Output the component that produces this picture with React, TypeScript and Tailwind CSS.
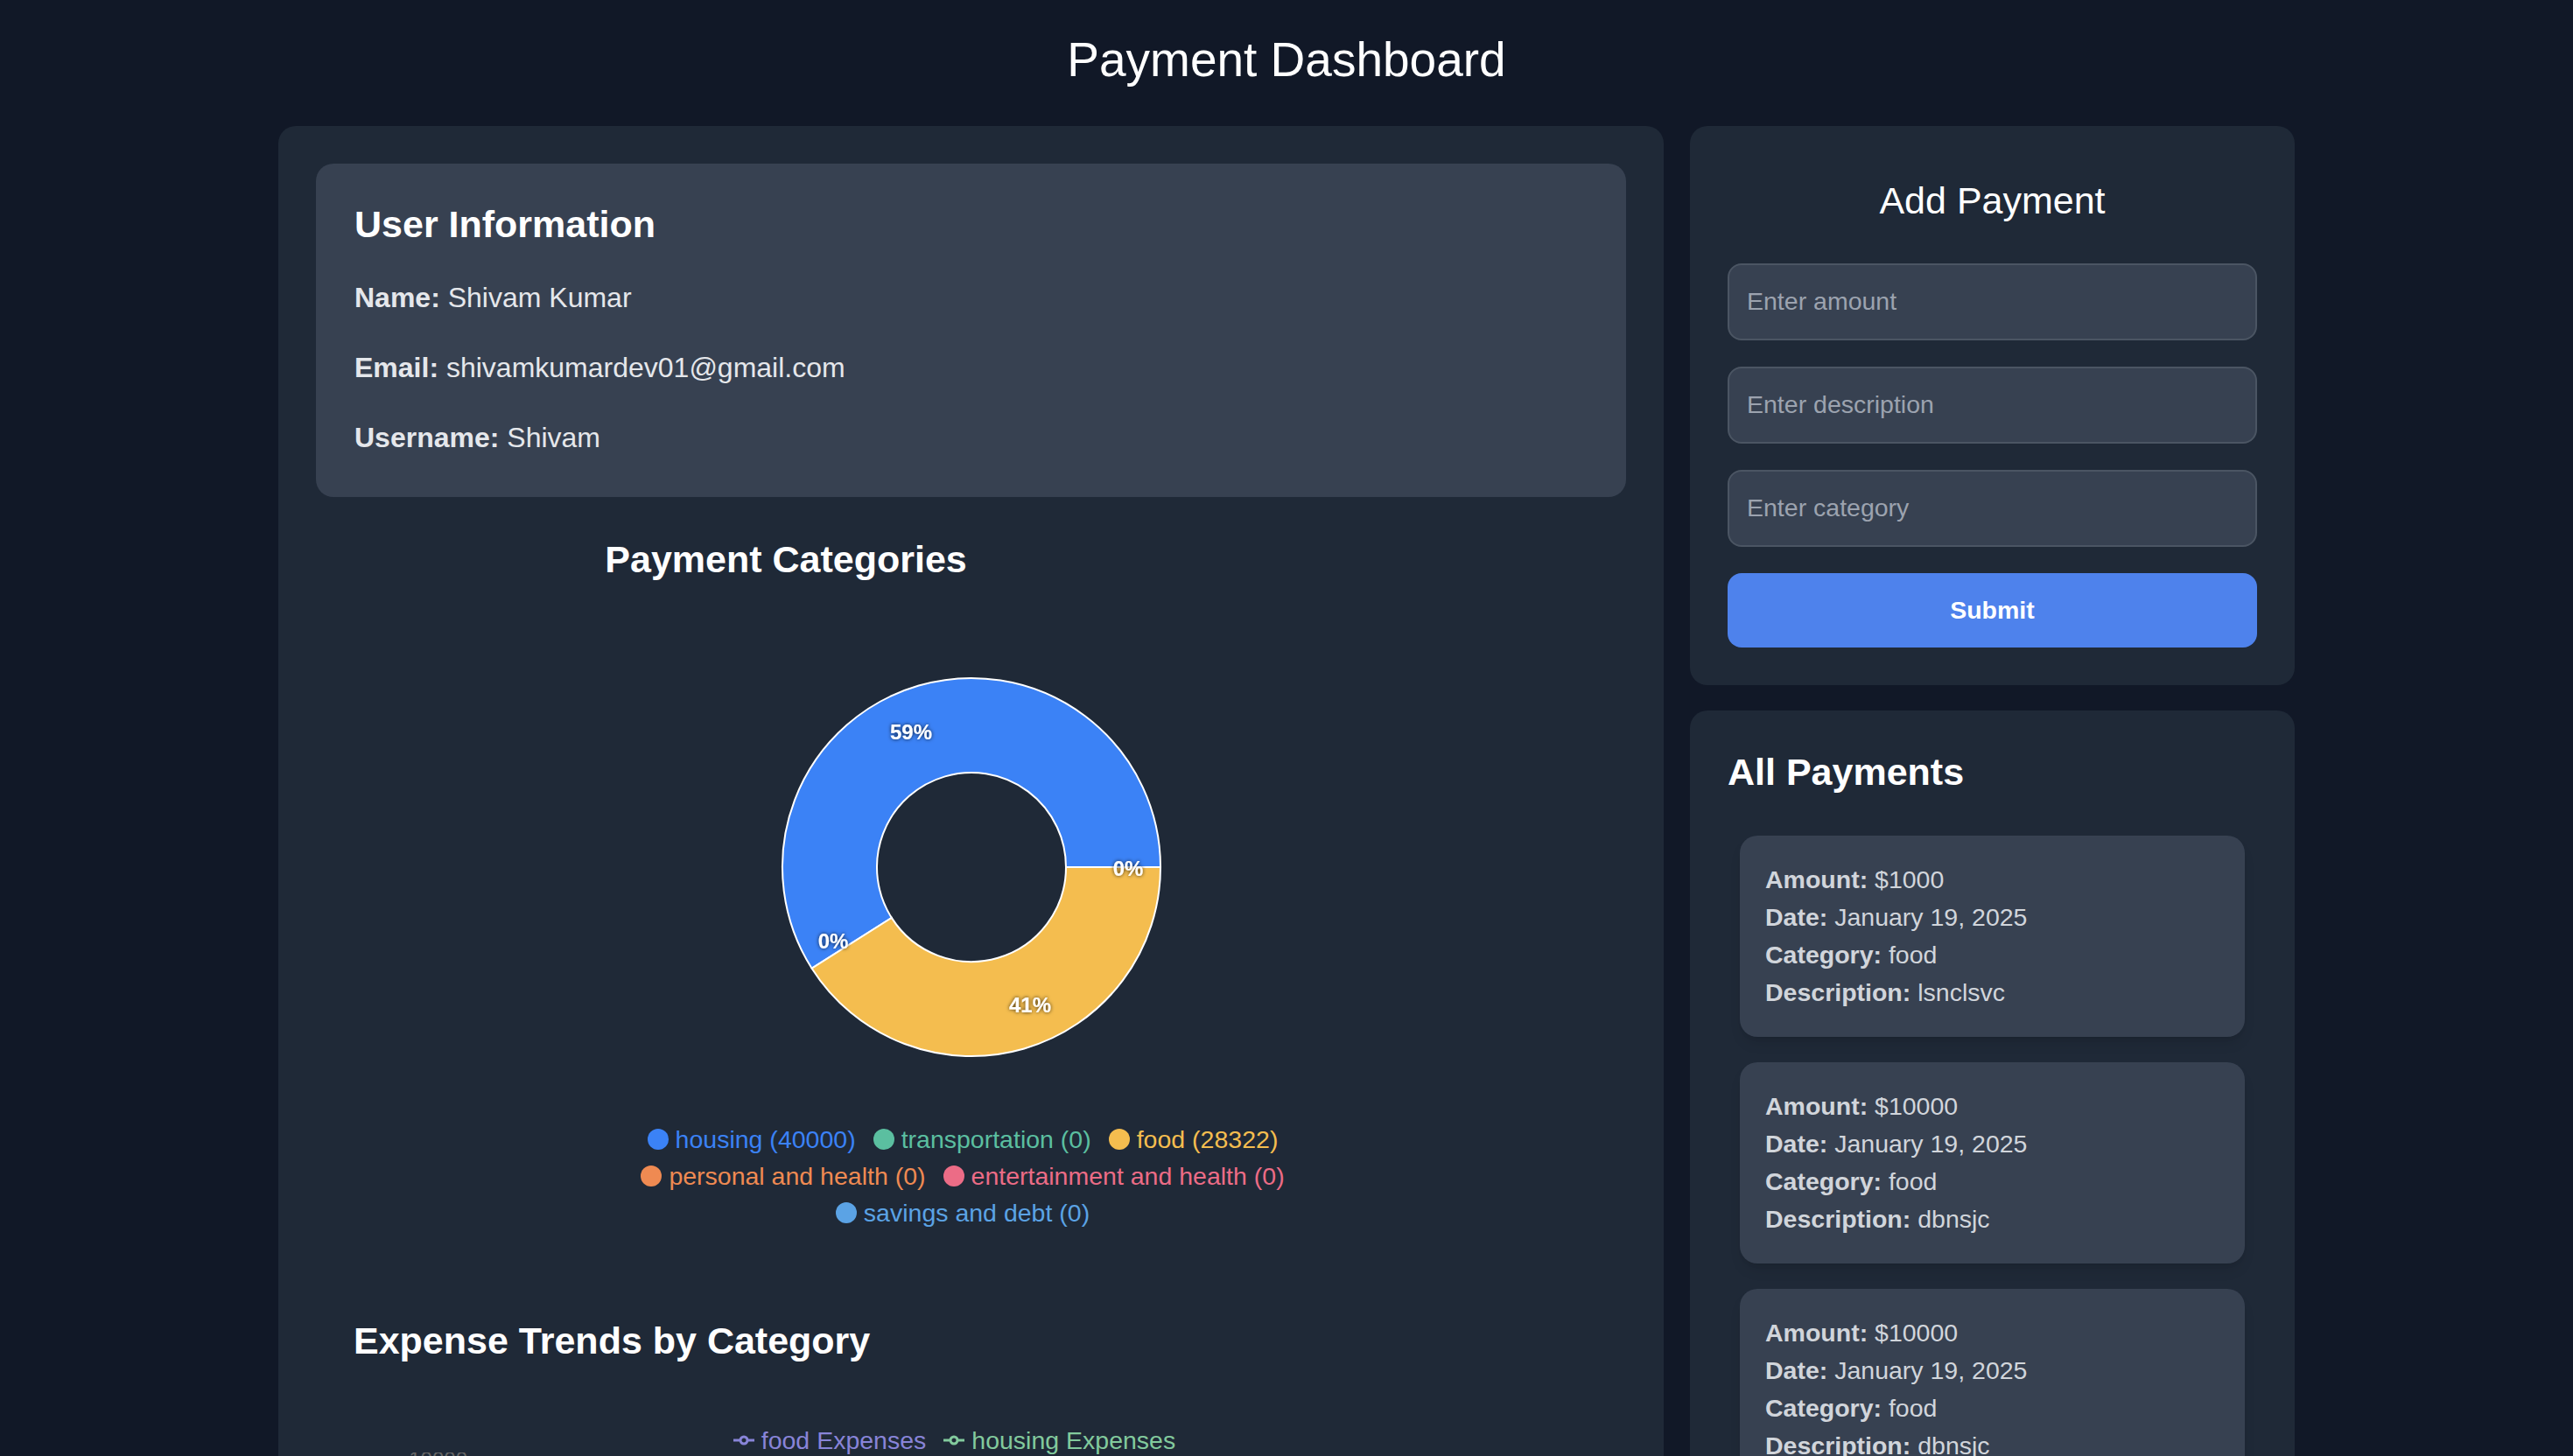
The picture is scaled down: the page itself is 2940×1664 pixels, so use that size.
const categories = [
  { name: "housing", value: 40000, color: "#3b82f6" },
  { name: "transportation", value: 0, color: "#5bbfa0" },
  { name: "food", value: 28322, color: "#f4bd4f" },
  { name: "personal and health", value: 0, color: "#ef8a52" },
  { name: "entertainment and health", value: 0, color: "#ec6c86" },
  { name: "savings and debt", value: 0, color: "#5ba3e5" },
]

const payments = [
  { amount: 1000, date: "January 19, 2025", category: "food", description: "lsnclsvc" },
  { amount: 10000, date: "January 19, 2025", category: "food", description: "dbnsjc" },
  { amount: 10000, date: "January 19, 2025", category: "food", description: "dbnsjc" },
]

const UserInfo = () => (
  <div className="rounded-[20px] bg-[#374151] p-[44px] text-[#e5e7eb]">
    <h2 className="text-[43px] font-bold leading-[1.2] text-white">User Information</h2>
    <p className="mt-[33px] text-[32px] leading-[48px]"><strong>Name:</strong> Shivam Kumar</p>
    <p className="mt-[32px] text-[32px] leading-[48px]"><strong>Email:</strong> shivamkumardev01@gmail.com</p>
    <p className="mt-[32px] text-[32px] leading-[48px]"><strong>Username:</strong> Shivam</p>
  </div>
)

const Donut = () => (
  <svg width="440" height="440" viewBox="0 0 440 440">
    <defs>
      <filter id="lbl" x="-50%" y="-50%" width="200%" height="200%">
        <feDropShadow dx="0" dy="0" stdDeviation="2" floodColor="#000" floodOpacity="0.8" />
      </filter>
    </defs>
    {/* housing 59% */}
    <path d="M 37.6 335.7 A 216 216 0 1 1 436 220 L 328 220 A 108 108 0 1 0 128.8 277.9 Z" fill="#3b82f6" stroke="#fff" strokeWidth="2" />
    {/* food 41% */}
    <path d="M 436 220 A 216 216 0 0 1 37.6 335.7 L 128.8 277.9 A 108 108 0 0 0 328 220 Z" fill="#f4bd4f" stroke="#fff" strokeWidth="2" />
    <g fill="#fff" fontSize="24" fontWeight="700" textAnchor="middle" dominantBaseline="central" filter="url(#lbl)">
      <text x="151" y="65">59%</text>
      <text x="399" y="221">0%</text>
      <text x="62" y="304">0%</text>
      <text x="287" y="377">41%</text>
    </g>
  </svg>
)

const PieLegend = () => (
  <div className="ml-[289px] mt-[70px] flex w-[900px] flex-wrap justify-center gap-x-[20px] text-[28.5px]">
    {categories.map((c) => (
      <div key={c.name} className="flex h-[42px] items-center gap-[8px]" style={{ color: c.color }}>
        <span className="h-[24px] w-[24px] rounded-full" style={{ backgroundColor: c.color }} />
        <span>{c.name} ({c.value})</span>
      </div>
    ))}
  </div>
)

const LineIcon = ({ color }: { color: string }) => (
  <svg width="24" height="24" viewBox="0 0 32 32">
    <path
      strokeWidth="4"
      fill="none"
      stroke={color}
      d="M0,16h10.67A5.33,5.33,0,1,1,21.33,16H32M21.33,16A5.33,5.33,0,1,1,10.67,16"
    />
  </svg>
)

const TrendChart = () => (
  <div className="w-[1373px]">
    <div className="mt-[73px] flex justify-center gap-[20px] text-[28.5px] leading-[28px]">
      <div className="flex items-center gap-[8px] text-[#8884d8]">
        <LineIcon color="#8884d8" />
        <span>food Expenses</span>
      </div>
      <div className="flex items-center gap-[8px] text-[#82ca9d]">
        <LineIcon color="#82ca9d" />
        <span>housing Expenses</span>
      </div>
    </div>
    <svg width="1373" height="620" viewBox="0 0 1373 620">
      {[0, 1, 2, 3, 4].map((i) => (
        <g key={i}>
          <line x1="140" x2="1340" y1={7 + i * 130} y2={7 + i * 130} stroke="#ccc" strokeDasharray="6 6" />
          <text x="130" y={7 + i * 130} fill="#666" fontSize="24" textAnchor="end" dominantBaseline="central">
            {10000 - i * 2500}
          </text>
        </g>
      ))}
      <line x1="140" x2="140" y1="7" y2="527" stroke="#666" strokeWidth="2" />
      <line x1="140" x2="1340" y1="527" y2="527" stroke="#666" strokeWidth="2" />
      <polyline points="140,501 740,501 1340,100" fill="none" stroke="#8884d8" strokeWidth="3" />
      <polyline points="140,527 740,527 1340,7" fill="none" stroke="#82ca9d" strokeWidth="3" />
    </svg>
  </div>
)

const AddPayment = () => (
  <div className="rounded-[20px] bg-[#1f2937] p-[43px]">
    <h2 className="mt-[17px] mb-[45px] text-center text-[43px] leading-[1.2] text-white">Add Payment</h2>
    <form className="flex flex-col gap-[30px]">
      <input placeholder="Enter amount" className="h-[88px] rounded-[16px] border-2 border-[#4b5563] bg-[#374151] px-[20px] text-[28.5px] text-white outline-none placeholder:text-[#9ca3af]" />
      <input placeholder="Enter description" className="h-[88px] rounded-[16px] border-2 border-[#4b5563] bg-[#374151] px-[20px] text-[28.5px] text-white outline-none placeholder:text-[#9ca3af]" />
      <input placeholder="Enter category" className="h-[88px] rounded-[16px] border-2 border-[#4b5563] bg-[#374151] px-[20px] text-[28.5px] text-white outline-none placeholder:text-[#9ca3af]" />
      <button type="button" className="h-[85px] rounded-[16px] bg-[#4e82ec] text-[28.5px] font-bold text-white">Submit</button>
    </form>
  </div>
)

const AllPayments = () => (
  <div className="rounded-[20px] bg-[#1f2937] p-[43px]">
    <h2 className="mt-[2px] text-[43px] font-bold leading-[1.2] text-white">All Payments</h2>
    <div className="mt-[47px] flex flex-col gap-[29px] px-[14px]">
      {payments.map((p, i) => (
        <div key={i} className="rounded-[20px] bg-[#374151] p-[29px] text-[28.5px] leading-[43px] text-[#d1d5db] shadow-lg">
          <p><strong>Amount:</strong> ${p.amount}</p>
          <p><strong>Date:</strong> {p.date}</p>
          <p><strong>Category:</strong> {p.category}</p>
          <p><strong>Description:</strong> {p.description}</p>
        </div>
      ))}
    </div>
  </div>
)

export default function App() {
  return (
    <div className="min-h-screen bg-[#111827] pb-[60px] font-['Liberation_Sans',Arial,sans-serif] text-white">
      <h1 className="pt-[35px] mb-[42px] text-center text-[55px] leading-[1.22]">Payment Dashboard</h1>
      <div className="mx-auto flex w-[2304px] items-start gap-[30px]">
        <div className="w-[1583px] rounded-[20px] bg-[#1f2937] p-[43px]">
          <UserInfo />
          <h2 className="mt-[46px] w-[1074px] text-center text-[43px] font-bold leading-[1.2]">Payment Categories</h2>
          <div className="mt-[106px] flex justify-center">
            <Donut />
          </div>
          <PieLegend />
          <div className="mt-[100px] px-[43px]">
            <h2 className="text-[43px] font-bold leading-[1.2]">Expense Trends by Category</h2>
            <TrendChart />
          </div>
        </div>
        <div className="flex w-[691px] flex-col gap-[29px]">
          <AddPayment />
          <AllPayments />
        </div>
      </div>
    </div>
  )
}
